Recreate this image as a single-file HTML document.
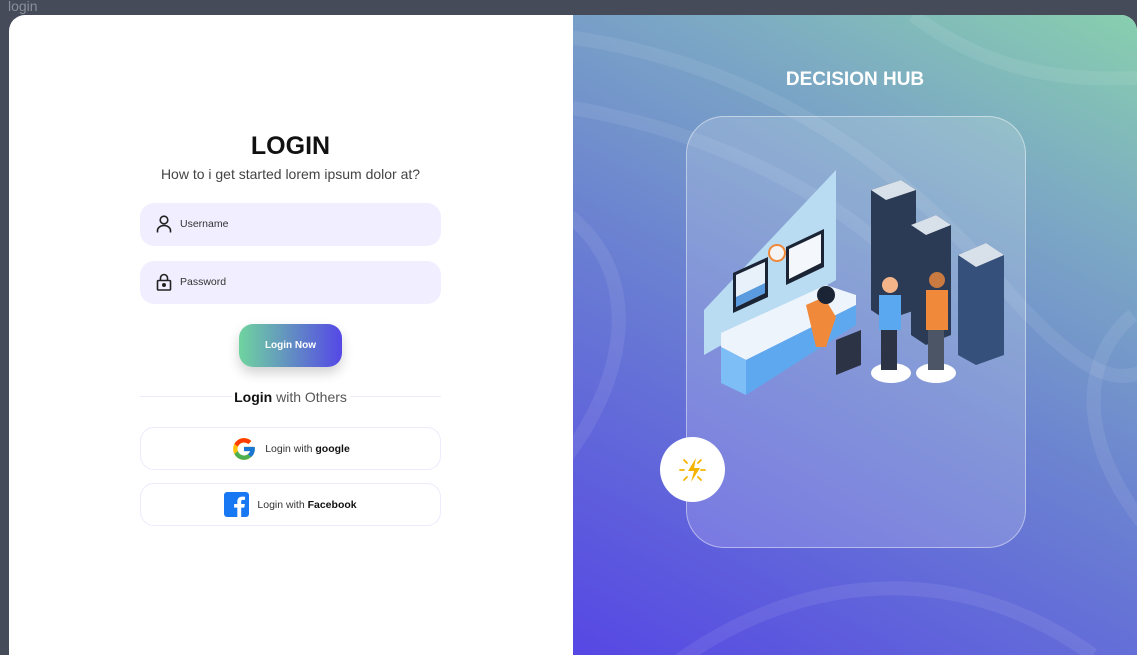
<!DOCTYPE html>
<html><head><style>
*{margin:0;padding:0;box-sizing:border-box}
body{width:1137px;height:648px;background:#454b59;font-family:"Liberation Sans",sans-serif;position:relative;overflow:hidden}
.tt{position:absolute;left:8px;top:-2px;color:#8a8f99;font-size:14px}
.card{position:absolute;left:9px;top:15px;width:1128px;height:640px;border-radius:16px 16px 0 0;overflow:hidden;background:#fff}
.right{position:absolute;left:564px;top:0;width:564px;height:640px;background:linear-gradient(28deg,#5647e4 0%,#6a7fd2 45%,#7ca9c4 75%,#88cfae 100%)}
h1{position:absolute;left:0;width:563px;top:117px;text-align:center;font-size:25px;font-weight:bold;color:#111}
.sub{position:absolute;left:0;width:563px;top:151px;text-align:center;font-size:14px;color:#444}
.inp{position:absolute;left:131px;width:301px;height:43px;border-radius:14px;background:#f1efff;font-size:10.5px;color:#333;padding-left:40px;line-height:43px}
.inp svg{position:absolute;left:16px;top:12px}
.btn{position:absolute;left:230px;top:309px;width:103px;height:43px;border-radius:14px;background:linear-gradient(90deg,#6fd49f,#5548e6);color:#fff;font-weight:bold;font-size:10px;text-align:center;line-height:43px;box-shadow:0 6px 12px rgba(0,0,0,.18)}
.line{position:absolute;top:381px;height:1px;background:#ecebfb}
.or{position:absolute;left:0;width:563px;top:374px;text-align:center;font-size:14px;color:#555}
.or b{color:#111}
.soc{position:absolute;left:131px;width:301px;height:43px;border-radius:14px;border:1px solid #ecebfb;font-size:10.5px;color:#333;display:flex;align-items:center;justify-content:center;gap:8px}
.soc b{color:#111}
.hub{position:absolute;left:0;width:564px;top:54px;text-align:center;color:#fff;font-weight:bold;font-size:19px}
.glass{position:absolute;left:113px;top:101px;width:340px;height:432px;border-radius:38px;border:1px solid rgba(255,255,255,.45);background:rgba(255,255,255,.17)}
.bolt{position:absolute;left:87px;top:422px;width:65px;height:65px;border-radius:50%;background:#fff}
</style></head><body>
<div class="tt">login</div>
<div class="card">
<h1>LOGIN</h1>
<div class="sub">How to i get started lorem ipsum dolor at?</div>
<div class="inp" style="top:188px"><svg width="16" height="18" viewBox="0 0 16 18" fill="none" stroke="#222" stroke-width="1.6"><circle cx="8" cy="5" r="3.8"/><path d="M1.5 17.5v-2a6.5 5 0 0 1 13 0v2"/></svg>Username</div>
<div class="inp" style="top:246px"><svg width="16" height="18" viewBox="0 0 16 18" fill="none" stroke="#222" stroke-width="1.6"><rect x="1.5" y="7.5" width="13" height="9.5" rx="1"/><path d="M4.5 7.5V5a3.5 3.5 0 0 1 7 0v2.5"/><circle cx="8" cy="12" r="1.2" fill="#222"/></svg>Password</div>
<div class="btn">Login Now</div>
<div class="line" style="left:131px;width:92px"></div>
<div class="line" style="left:342px;width:90px"></div>
<div class="or"><b>Login</b> with Others</div>
<div class="soc" style="top:412px"><svg width="26" height="26" viewBox="0 0 48 48"><path fill="#FFC107" d="M43.6 20H24v8h11.3C33.7 33 29.3 36 24 36c-6.6 0-12-5.4-12-12s5.4-12 12-12c3 0 5.8 1.1 7.9 3l5.7-5.7C34 6 29.3 4 24 4 13 4 4 13 4 24s9 20 20 20 20-9 20-20c0-1.3-.1-2.7-.4-4z"/><path fill="#FF3D00" d="M6.3 14.7l6.6 4.8C14.7 15.1 19 12 24 12c3 0 5.8 1.1 7.9 3l5.7-5.7C34 6 29.3 4 24 4 16.3 4 9.7 8.3 6.3 14.7z"/><path fill="#4CAF50" d="M24 44c5.2 0 9.9-2 13.4-5.2l-6.2-5.2C29.2 35.1 26.7 36 24 36c-5.2 0-9.6-3.3-11.3-8l-6.5 5C9.5 39.6 16.2 44 24 44z"/><path fill="#1976D2" d="M43.6 20H24v8h11.3c-.8 2.2-2.2 4.2-4.1 5.6l6.2 5.2C37 39.2 44 34 44 24c0-1.3-.1-2.7-.4-4z"/></svg><span>Login with <b>google</b></span></div>
<div class="soc" style="top:468px"><svg width="25" height="25" viewBox="0 0 24 24"><rect width="24" height="24" rx="3" fill="#1877f2"/><path fill="#fff" d="M16.5 24v-9h3l.5-3.5h-3.5V9.3c0-1 .3-1.7 1.8-1.7h1.9V4.5c-.3 0-1.5-.1-2.8-.1-2.8 0-4.6 1.7-4.6 4.8v2.3H9.7V15h3.1v9z"/></svg><span>Login with <b>Facebook</b></span></div>

<div class="right">
<svg width="564" height="640" style="position:absolute;left:0;top:0" fill="none" stroke="rgba(255,255,255,.08)" stroke-width="14"><path d="M-20 20 C150 40 300 120 420 260 S560 360 600 340"/><path d="M-20 90 C120 110 250 170 330 250"/><path d="M-20 190 C80 250 60 380 -40 480"/><path d="M560 300 C500 350 510 440 580 520"/><path d="M100 650 C220 560 380 540 520 640"/><path d="M340 0 C420 60 500 70 600 60"/></svg>
<div class="hub">DECISION HUB</div>
<div class="glass"></div>
<svg width="340" height="260" style="position:absolute;left:113px;top:150px" viewBox="0 0 340 260">
<polygon points="18,145 18,190 150,115 150,5" fill="#b9dcf3"/>
<polygon points="35,168 140,120 170,130 170,140 60,195 35,182" fill="#eef4fb"/>
<polygon points="35,182 60,195 60,230 35,218" fill="#7cbef5"/>
<polygon points="60,195 170,140 170,160 60,230" fill="#5ea8ef"/>
<polygon points="47,108 82,92 82,132 47,148" fill="#1b2434"/><polygon points="50,110 79,97 79,128 50,142" fill="#e8f1fa"/><polygon points="50,132 79,118 79,128 50,142" fill="#5a9be0"/>
<polygon points="100,82 138,64 138,102 100,120" fill="#1b2434"/><polygon points="103,84 135,69 135,98 103,114" fill="#f4f8fc"/>
<circle cx="91" cy="88" r="8" fill="#f4f4f4" stroke="#f08a3a" stroke-width="2"/>
<path d="M120 140 l18 -8 l12 20 l-10 30 l-10 0z" fill="#f08a3a"/>
<circle cx="140" cy="130" r="9" fill="#1b2434"/>
<polygon points="150,175 175,165 175,200 150,210" fill="#2b3344"/>
<polygon points="185,25 215,15 230,25 230,145 200,155 185,145" fill="#2b3a55"/>
<polygon points="185,25 215,15 230,25 200,35" fill="#d8e0ea"/>
<polygon points="225,60 250,50 265,60 265,170 240,180 225,170" fill="#2b3a55"/>
<polygon points="225,60 250,50 265,60 240,70" fill="#d8e0ea"/>
<polygon points="272,90 300,78 318,90 318,190 290,200 272,190" fill="#35507a"/>
<polygon points="272,90 300,78 318,90 290,102" fill="#d8e0ea"/>
<ellipse cx="205" cy="208" rx="20" ry="10" fill="#fff"/>
<ellipse cx="250" cy="208" rx="20" ry="10" fill="#fff"/>
<path d="M193 130 h22 v35 h-22z" fill="#5aa8f0"/><rect x="195" y="165" width="16" height="40" fill="#2b3344"/><circle cx="204" cy="120" r="8" fill="#f3b48a"/>
<path d="M240 125 h22 v40 h-22z" fill="#f08a3a"/><rect x="242" y="165" width="16" height="40" fill="#4b5566"/><circle cx="251" cy="115" r="8" fill="#c97a40"/>
</svg>
<div class="bolt"><svg width="65" height="65" viewBox="0 0 65 65"><path d="M36 21 L28 34 h6 l-3 11 l9-14 h-6z" fill="#f5b400"/><g stroke="#f5b400" stroke-width="1.8" stroke-linecap="round"><path d="M20 33h4M41 33h4M24 23l3 3M41 23l-3 3M24 43l3-3M41 43l-3-3"/></g></svg></div>
</div>
</div>
</body></html>
